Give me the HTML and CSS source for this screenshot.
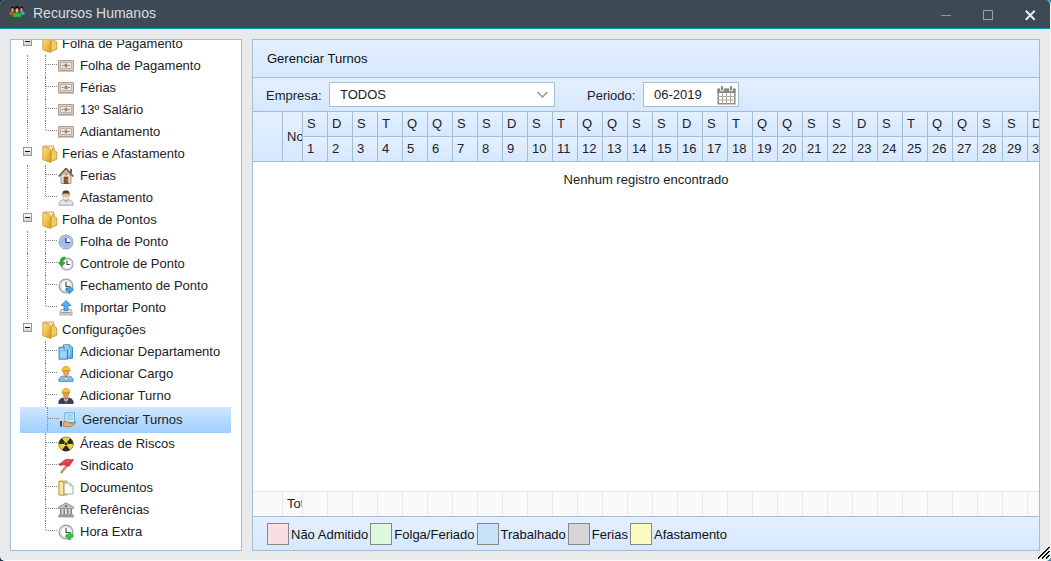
FILE: index.html
```html
<!DOCTYPE html>
<html lang="pt-BR">
<head>
<meta charset="utf-8">
<title>Recursos Humanos</title>
<link rel="stylesheet" href="styles.css">
</head>
<body>
<svg class="sprite" aria-hidden="true">
  <defs>
    <linearGradient id="gold" x1="0" y1="0" x2="1" y2="1"><stop offset="0" stop-color="#fbe38c"/><stop offset=".6" stop-color="#edbd42"/><stop offset="1" stop-color="#d39822"/></linearGradient>
    <linearGradient id="sky" x1="0" y1="0" x2="1" y2="1"><stop offset="0" stop-color="#b9e2fb"/><stop offset="1" stop-color="#4aa5e0"/></linearGradient>
    <symbol id="folder" viewBox="0 0 17 18">
      <path d="M1.5 1h10.2v13H1.5z" fill="#fbeec0" stroke="#c99a33" stroke-width=".9"/>
      <path d="M9 14V6.5l1.5-1.2V3.4h1.6v2L14.8 7v7.2L9 16.5z" fill="#f3cb60" stroke="#c1902c" stroke-width=".8"/>
      <path d="M.8 1.5 6.8 3l1.8 1.7v12.8L.8 14.8z" fill="url(#gold)" stroke="#c89427" stroke-width=".8"/>
    </symbol>
    <symbol id="money" viewBox="0 0 16 16">
      <path d="M.5 2.5h15v10H.5z" fill="#d9ccc2" stroke="#b09f94"/><path d="M2.5 4.5h11v6h-11z" fill="#efe7e0" stroke="#bfafa4"/>
      <path d="M0 13.5h16" stroke="#cfc5bd"/><circle cx="8" cy="7.5" r="2" fill="#b3a196"/><path d="M8 6v3M4 7.5h1.5M10.5 7.5H12" stroke="#806d62"/>
    </symbol>
    <symbol id="house" viewBox="0 0 16 16">
      <path d="M12 1h2v4h-2z" fill="#9c4c3c"/><path d="M3 8 8 2.5 13 8v7.5H3z" fill="#eadfcb" stroke="#98805f" stroke-width=".8"/>
      <path d="m.7 8.5 7.3-8 7.3 8" fill="none" stroke="#765b4c" stroke-width="1.8"/><path d="M6 9h4v6.5H6z" fill="#9b582f" stroke="#6d3d24" stroke-width=".6"/><path d="M7 5h2v2H7z" fill="#a8c4dc" stroke="#866a51" stroke-width=".5"/><path d="M9 12h1" stroke="#f5ce68"/>
    </symbol>
    <symbol id="patient" viewBox="0 0 16 16">
      <path d="M1 15.2c0-4 2-5 4.5-5.4L8 12l2.5-2.2c2.5.4 4.5 1.4 4.5 5.4z" fill="#e2e6ed" stroke="#969eab" stroke-width=".9"/>
      <path d="M6 9h4l-.5 2L8 12l-1.5-1z" fill="#dca578"/><ellipse cx="8" cy="5.5" rx="3.5" ry="4.4" fill="#e9b98f"/><path d="M4.5 5.5C4 1.6 5.2.4 8 .4s4 1.2 3.5 5.1L10.6 3.4H5.4z" fill="#563820"/><path d="M5 6.8h6L10.3 9 8 10 5.7 9z" fill="#eef4f5" stroke="#b9c3c8" stroke-width=".5"/>
    </symbol>
    <symbol id="clock" viewBox="0 0 16 16">
      <circle cx="8" cy="8" r="6.9" fill="#e8ebed" stroke="#979ea4" stroke-width="1.2"/><circle cx="8" cy="8" r="5.2" fill="#fff" stroke="#bdc4c9" stroke-width=".6"/>
      <path d="M8 4v4.5h3.5" fill="none" stroke="#40484e" stroke-width="1.2"/>
    </symbol>
    <symbol id="clockblue" viewBox="0 0 16 16">
      <circle cx="8" cy="8" r="6.9" fill="#e6eaf0" stroke="#a0a7b3" stroke-width="1.2"/><circle cx="8" cy="8" r="5.2" fill="#eef4fe" stroke="#7790d0"/><path d="M8 3v5.5h5A5.2 5.2 0 1 1 8 3z" fill="#9fbbf4"/>
      <path d="M8 4v4.5h4" fill="none" stroke="#283777" stroke-width="1.2"/>
    </symbol>
    <symbol id="clockback" viewBox="0 0 16 16">
      <svg x="2" y="1" width="14" height="14"><use href="#clock"/></svg>
      <path d="M7 1C3 1 2.2 3.2 2.2 6.5H.2l3.5 4 3.5-4H5C5 4 5.3 3 7 3z" fill="#31aa35" stroke="#17821e" stroke-width=".6"/>
    </symbol>
    <symbol id="clocknext" viewBox="0 0 16 16">
      <use href="#clock"/><path d="M8 10h3V7.8l4.5 4-4.5 4V13H8z" fill="#43a8ef" stroke="#1965ac" stroke-width=".7"/>
    </symbol>
    <symbol id="clockadd" viewBox="0 0 16 16">
      <use href="#clock"/><path d="M10.3 8.5h2.4v2.3H15v2.4h-2.3v2.3h-2.4v-2.3H8v-2.4h2.3z" fill="#43cc49" stroke="#168b25" stroke-width=".7"/>
    </symbol>
    <symbol id="upload" viewBox="0 0 16 16">
      <path d="m3 9.5-1 2V15h12v-3.5l-1-2z" fill="#e3e6e8" stroke="#8d959b" stroke-width=".8"/><path d="M3 12.8h10" stroke="#7b8389"/>
      <path d="m8 .4 5 5h-3v5.2H6V5.4H3z" fill="#55b0ed" stroke="#2476b4" stroke-width=".7"/>
    </symbol>
    <symbol id="pages" viewBox="0 0 16 16">
      <path d="M5.5.8h6l3 2.5v11h-9z" fill="url(#sky)" stroke="#2e7fbd" stroke-width=".9"/><path d="M1 3.2h5.5L9.5 6v9.2H1z" fill="#8bcbf3" stroke="#2c80bd" stroke-width=".9"/>
      <path d="M6.5 3.2V6h3M11.5 1v2.4h3" fill="#dff3ff" stroke="#3586bf" stroke-width=".7"/><path d="M3 8v5M5 8v5M7 8v5M11.5 6v6" stroke="#d0edff" stroke-width=".6"/>
    </symbol>
    <symbol id="worker" viewBox="0 0 16 16">
      <path d="M.8 15.4c0-4 2-5 4.5-5.4L8 12l2.7-2c2.5.4 4.5 1.4 4.5 5.4z" fill="#82bde9" stroke="#4d82b3" stroke-width=".8"/><path d="m6 10.8 2 3 2-3L8 12z" fill="#fff"/><path d="M6.5 9h3v2L8 12l-1.5-1z" fill="#b97645"/>
      <ellipse cx="8" cy="6.3" rx="3" ry="3.8" fill="#dca16e"/><path d="M4 5C4 2 5.5.5 8 .5S12 2 12 5L8 4.5z" fill="#f8c52d" stroke="#cf8b15" stroke-width=".7"/><path d="M4 5.2q4-1.5 8 0" fill="none" stroke="#dc9514"/>
    </symbol>
    <symbol id="boss" viewBox="0 0 16 16">
      <path d="M.8 15.4c0-4 2-5 4.5-5.4L8 12l2.7-2c2.5.4 4.5 1.4 4.5 5.4z" fill="#34425c" stroke="#202a40" stroke-width=".8"/><path d="m5.5 10.2 2.5 5 2.5-5L8 12z" fill="#fff"/><path d="m8 11.5 1 2.5-1 1.5-1-1.5z" fill="#9c3837"/><path d="M6.5 9h3v2L8 12l-1.5-1z" fill="#b97645"/>
      <ellipse cx="8" cy="6.3" rx="3" ry="3.8" fill="#d49869"/><path d="M4 5C4 2 5.5.5 8 .5S12 2 12 5L8 4.5z" fill="#f8c52d" stroke="#cf8b15" stroke-width=".7"/><path d="M4 5.2q4-1.5 8 0" fill="none" stroke="#dc9514"/>
    </symbol>
    <symbol id="hand" viewBox="0 0 16 16">
      <path d="M5 .8h9.5v9.5H5z" fill="#e4f7fe" stroke="#4ba6d6" stroke-width=".9"/><path d="M6.5 3h7M6.5 5h7M6.5 7h7M8 2v7M10 2v7M12 2v7" stroke="#72bce0" stroke-width=".7"/>
      <path d="M0 9h2.4v5.5H0z" fill="#333b55"/><path d="M2.4 9.5h1v4.5h-1z" fill="#fff"/><path d="M3.4 10 6 9.2l3 1.5h2.5v1l4-1.8.3.9-4.2 3.6-4.6.5-3.6-1z" fill="#e4ae7a" stroke="#9f6a40" stroke-width=".7"/>
    </symbol>
    <symbol id="hazard" viewBox="0 0 16 16">
      <ellipse cx="8" cy="8" rx="7.4" ry="7" fill="#e8d537" stroke="#777130" stroke-width=".8"/><path d="M7 6 3.8 2.2A7 7 0 0 0 1 8h5zM9 6l3.2-3.8A7 7 0 0 1 15 8h-5zM7 10l-3 4a7.5 7.5 0 0 0 8 0l-3-4z" fill="#292b29"/><circle cx="8" cy="8" r="1.4" fill="#33342d"/>
    </symbol>
    <symbol id="flag" viewBox="0 0 16 16">
      <path d="m9.5 5.5 1.4.8-7 9-1.5-1z" fill="#d8a25e" stroke="#936437" stroke-width=".6"/><path d="M.5 6.2C3 6.5 5.5 2 8 1.5c2.5-.5 4 .7 7.5 0L11.3 8C9 9 7.5 6.6 5.5 6.8S2.8 8.3.5 6.2z" fill="#e43d48" stroke="#b52c36" stroke-width=".7"/><path d="M5 5.2C7.5 2.5 9 3.4 12 3.3" fill="none" stroke="#f0666c"/>
    </symbol>
    <symbol id="docs" viewBox="0 0 16 16">
      <path d="M1 1h8v14H1z" fill="#edcf7d" stroke="#b8923c" stroke-width=".8"/><path d="M6 3h6l3 3v8H6z" fill="#f5fbf5" stroke="#91a396" stroke-width=".8"/><path d="M12 3v3h3" fill="#d5e3d7" stroke="#91a396" stroke-width=".7"/><path d="m1 1 4.7 1.2v13.3L1 14.5z" fill="#f9e5a3" stroke="#b8923c" stroke-width=".8"/>
    </symbol>
    <symbol id="bank" viewBox="0 0 16 16">
      <path d="M8 .8 15.5 5v1.5H.5V5z" fill="#bfc1c2" stroke="#77797b" stroke-width=".7"/><circle cx="8" cy="4.1" r="1.2" fill="#686b6d"/><path d="M2 7h12v5H2z" fill="#dedfe0"/><path d="M2.8 7v5M6.2 7v5M9.8 7v5M13.2 7v5" stroke="#77797c" stroke-width="1.4"/><path d="M1 12.5h14v1H1zM.4 14h15.2v1H.4z" fill="#c5c6c7" stroke="#77797b" stroke-width=".6"/>
    </symbol>
  </defs>
</svg>
<div class="window">
  <header class="titlebar">
    <svg class="app-icon" viewBox="0 0 16 12">
      <path d="M.5 9V6q2-1.5 4.5 0v3z" fill="#e64a2b"/><path d="M11 6q3-1.5 4.5 0v3H11z" fill="#3d9fd5"/><ellipse cx="3.5" cy="3" rx="2" ry="2.6" fill="#170d0b"/><ellipse cx="12.5" cy="3" rx="2" ry="2.6" fill="#170d0b"/><ellipse cx="3.5" cy="3.9" rx="1.3" ry="1.8" fill="#e5a076"/><ellipse cx="12.5" cy="3.9" rx="1.3" ry="1.8" fill="#e5a076"/>
      <path d="M3.5 11.3V8.3Q4.5 6.6 8 6.6t4.5 1.7v3z" fill="#35b932" stroke="#14591a" stroke-width=".5"/><ellipse cx="8" cy="3.3" rx="2.4" ry="3.2" fill="#1b0d0a"/><ellipse cx="8" cy="4.5" rx="1.6" ry="2.2" fill="#efb08a"/>
    </svg>
    <h1 class="caption">Recursos Humanos</h1>
    <div class="controls">
      <svg width="11" height="11" viewBox="0 0 11 11"><path d="M0 5.5h10" stroke="#8e969c"/></svg>
      <svg width="11" height="11" viewBox="0 0 11 11"><path d="M.5.5h9v9h-9z" fill="none" stroke="#9ca2a7"/></svg>
      <svg width="11" height="11" viewBox="0 0 11 11"><path d="m.8.8 8.9 8.9M9.7.8.8 9.7" stroke="#e9edee" stroke-width="2"/></svg>
    </div>
  </header>
  <main class="content">
    <nav class="tree" id="tree"></nav>
    <section class="panel">
      <h2 class="panel-title">Gerenciar Turnos</h2>
      <div class="toolbar">
        <span class="label empresa">Empresa:</span>
        <div class="field combo"><span>TODOS</span><svg width="13" height="8" viewBox="0 0 13 8"><path d="m1.5 1 5 5 5-5" fill="none" stroke="#949494" stroke-width="1.5"/></svg></div>
        <span class="label periodo">Periodo:</span>
        <div class="field date"><span>06-2019</span><svg width="19" height="20" viewBox="0 0 19 20"><path d="M.5 3.5h18v4.5H.5z" fill="#8b8986"/><path d="M1.2 4.5h16.6v14.3H1.2z" fill="none" stroke="#8b8986" stroke-width="1.5"/><path d="M1 11.5h17M1 15h17M5.5 8v11M9.5 8v11M13.5 8v11" stroke="#b3a79e"/><path d="M3.5.8h3v5h-3zM12.5.8h3v5h-3z" fill="#8b8986" stroke="#fff" stroke-width=".8"/></svg></div>
      </div>
      <div class="grid-head"><div class="col-blank"></div><div class="col-name">Nome</div><div class="days" id="days"></div></div>
      <div class="grid-body">Nenhum registro encontrado</div>
      <div class="grid-foot"><div class="col-blank"></div><div class="col-name">Total</div><div class="days" id="totals"></div></div>
      <footer class="legend">
        <i class="swatch pink"></i><span>Não Admitido</span>
        <i class="swatch green"></i><span>Folga/Feriado</span>
        <i class="swatch blue"></i><span>Trabalhado</span>
        <i class="swatch gray"></i><span>Ferias</span>
        <i class="swatch yellow"></i><span>Afastamento</span>
      </footer>
    </section>
  </main>
  <svg class="grip" width="12" height="12" viewBox="0 0 12 12" shape-rendering="crispEdges"><path d="M0 11.5 11.5 0M4 11.5 11.5 4M8 11.5 11.5 8" stroke="#111" stroke-width="1.2"/></svg>
</div>
<script src="app.js"></script>
</body>
</html>
```
FILE: styles.css
```css
* { box-sizing: border-box; }
body { margin: 0; background: linear-gradient(90deg, #123548 0 50%, #2589b5 50%); font: 13px "Liberation Sans", Arial, sans-serif; color: #222; overflow: hidden; }
.sprite { position: absolute; width: 0; height: 0; }
.window { position: relative; width: 1051px; height: 561px; display: flex; flex-direction: column; background: #eaeaea; border-radius: 5px; overflow: hidden; border-right: 1px solid #f7f7f7; border-bottom: 1px solid #fafafa; }
.titlebar { height: 29px; flex: none; display: flex; align-items: center; background: #3d4a55; border-bottom: 1px solid #0794ad; padding: 0 14px 0 9px; }
.app-icon { width: 16px; height: 12px; margin-top: -4px; }
.caption { margin: -2px auto 0 8px; font-size: 14px; font-weight: 400; color: #d8dde1; }
.controls { display: flex; gap: 31px; padding-top: 2px; }
.content { flex: 1; min-height: 0; display: flex; gap: 10px; padding: 10px 10px 9px; }
.tree { width: 232px; flex: none; border: 1px solid #a3bed4; background: #fff; overflow: hidden; }
.tree-list { margin: -7px 0 0; padding: 0 10px 0 9px; list-style: none; }
.row { display: flex; height: 22px; line-height: 22px; white-space: nowrap; }
.gutter { width: 25px; flex: none; padding-left: 7px; }
.gutter::before { content: ""; display: block; height: 22px; }
.gutter.line::before { border-left: 1px dotted #858585; }
.expander { display: block; width: 9px; height: 9px; border: 1px solid #7f9db9; background: linear-gradient(#fff, #d5d1c5); margin: 4px 0 0 3px; padding: 3px 1px; }
.expander::before { content: ""; display: block; height: 1px; background: #111; }
.folder-gutter { width: 22px; flex: none; }
.folder-icon { width: 17px; height: 18px; flex: none; margin: 2px 3px 0 0; }
.branch { width: 13px; flex: none; height: 22px; border-left: 1px dotted #858585; }
.branch::before { content: ""; display: block; height: 9px; border-bottom: 1px dotted #858585; width: 11px; }
.last .branch { height: 9px; }
.item-icon { width: 16px; height: 16px; flex: none; margin: 3px 6px 0 0; }
.selected { height: 26px; padding: 0 2px; background: linear-gradient(#cfe6ff, #9fceff); line-height: 25px; }
.selected .branch { height: 24px; }
.selected .branch::before { height: 11px; }
.selected .item-icon { margin-top: 5px; }
.panel { width: 788px; flex: none; border: 1px solid #a3bed4; display: flex; flex-direction: column; background: #fff; }
.panel-title { margin: 0; height: 38px; flex: none; border-bottom: 1px solid #a3bed4; padding-left: 14px; line-height: 37px; font-size: 13px; font-weight: 400; background: linear-gradient(#e4f0ff, #d6e7ff); color: #111; }
.toolbar { height: 34px; flex: none; display: flex; align-items: flex-start; border-bottom: 1px solid #a3bed4; background: linear-gradient(#e4f0ff, #d6e7ff); padding: 4px 13px; }
.label { line-height: 27px; }
.empresa { width: 63px; }
.periodo { width: 56px; margin-left: 32px; }
.field { height: 25px; border: 1px solid #a3bed4; background: #fff; display: flex; justify-content: space-between; align-items: center; padding-left: 10px; }
.combo { width: 226px; padding-right: 5px; }
.date { width: 96px; padding-right: 2px; }
.grid-head { height: 50px; flex: none; display: flex; overflow: hidden; background: linear-gradient(#e4f0ff, #d6e7ff); border-bottom: 1px solid #a3bed4; }
.col-blank { width: 30px; flex: none; border-right: 1px solid #a3bed4; }
.col-name { width: 20px; flex: none; border-right: 1px solid #a3bed4; overflow: hidden; padding-left: 4px; line-height: 50px; }
.days { display: flex; flex: 1; min-width: 0; overflow: hidden; }
.day { width: 25px; flex: none; border-right: 1px solid #a3bed4; }
.day span { display: block; height: 25px; line-height: 24px; padding-left: 4px; background: linear-gradient(#e4f0ff, #d6e7ff); }
.day span:first-child { border-bottom: 1px solid #a3bed4; }
.grid-body { flex: 1; padding-top: 10px; text-align: center; }
.grid-foot { height: 25px; flex: none; display: flex; overflow: hidden; background: #fafafa; border-top: 1px solid #e7e7e7; }
.grid-foot .col-blank, .grid-foot .col-name, .grid-foot .day { border-color: #e9e9e9; line-height: 24px; }
.legend { height: 34px; flex: none; display: flex; align-items: center; padding: 1px 14px 0; border-top: 1px solid #a3bed4; background: linear-gradient(#e4f0ff, #d6e7ff); white-space: nowrap; color: #111; }
.swatch { width: 22px; height: 22px; flex: none; border: 1px solid #888; margin-right: 2px; }
.legend span { margin-right: 2px; }
.pink { background: #fadfe2; }
.green { background: #dcf8df; }
.blue { background: #cae1fa; }
.gray { background: #d5d5d5; }
.yellow { background: #fcfcc0; }
.grip { position: absolute; right: 0; bottom: 1px; }
```
FILE: app.js
```js
const groups = [
  ["Folha de Pagamento", [["Folha de Pagamento", "money"], ["Férias", "money"], ["13º Salário", "money"], ["Adiantamento", "money"]]],
  ["Ferias e Afastamento", [["Ferias", "house"], ["Afastamento", "patient"]]],
  ["Folha de Pontos", [["Folha de Ponto", "clockblue"], ["Controle de Ponto", "clockback"], ["Fechamento de Ponto", "clocknext"], ["Importar Ponto", "upload"]]],
  ["Configurações", [["Adicionar Departamento", "pages"], ["Adicionar Cargo", "worker"], ["Adicionar Turno", "boss"], ["Gerenciar Turnos", "hand"], ["Áreas de Riscos", "hazard"], ["Sindicato", "flag"], ["Documentos", "docs"], ["Referências", "bank"], ["Hora Extra", "clockadd"]]]
];

const rows = groups.map(([name, items], g) => {
  const line = g < groups.length - 1 ? " line" : "";
  const head = `<li class="row folder"><div class="folder-gutter"><i class="expander"></i></div><svg class="folder-icon"><use href="#folder"/></svg><span>${name}</span></li>`;
  return head + items.map(([text, icon], i) => {
    const state = (i === items.length - 1 ? " last" : "") + (text === "Gerenciar Turnos" ? " selected" : "");
    return `<li class="row${state}"><div class="gutter${line}"></div><div class="branch"></div><svg class="item-icon"><use href="#${icon}"/></svg><span>${text}</span></li>`;
  }).join("");
}).join("");
document.getElementById("tree").innerHTML = `<ul class="tree-list">${rows}</ul>`;

const week = "SDSTQQS";
const days = Array.from({ length: 30 }, (_, i) => i);
document.getElementById("days").innerHTML = days.map(i => `<div class="day"><span>${week[i % 7]}</span><span>${i + 1}</span></div>`).join("");
document.getElementById("totals").innerHTML = days.map(() => `<div class="day"></div>`).join("");
```
